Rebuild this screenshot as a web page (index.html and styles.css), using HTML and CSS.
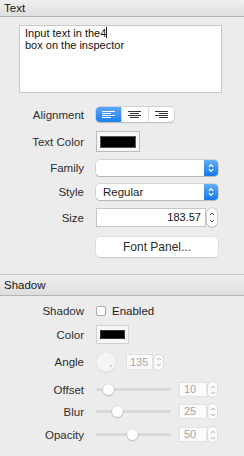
FILE: index.html
```html
<!DOCTYPE html>
<html>
<head>
<meta charset="utf-8">
<link rel="stylesheet" href="styles.css">
</head>
<body>
<div class="panel">
  <div class="hdr">Text</div>
  <div class="textbox">Input text in the4<span class="caret"></span><br>box on the inspector</div>

  <div class="row r-align">
    <span class="lbl">Alignment</span>
    <div class="seg">
      <div class="segi on">
        <svg width="13" height="7" viewBox="0 0 13 7"><g fill="#fff"><rect x="0" y="0" width="13" height="1"/><rect x="0" y="2" width="9" height="1"/><rect x="0" y="4" width="13" height="1"/><rect x="0" y="6" width="9" height="1"/></g></svg>
      </div>
      <div class="segi">
        <svg width="13" height="7" viewBox="0 0 13 7"><g fill="#333"><rect x="0" y="0" width="13" height="1"/><rect x="2" y="2" width="9" height="1"/><rect x="0" y="4" width="13" height="1"/><rect x="2" y="6" width="9" height="1"/></g></svg>
      </div>
      <div class="segi">
        <svg width="13" height="7" viewBox="0 0 13 7"><g fill="#333"><rect x="0" y="0" width="13" height="1"/><rect x="4" y="2" width="9" height="1"/><rect x="0" y="4" width="13" height="1"/><rect x="4" y="6" width="9" height="1"/></g></svg>
      </div>
    </div>
  </div>

  <div class="row r-color">
    <span class="lbl">Text Color</span>
    <div class="well"><div class="well-in"></div></div>
  </div>

  <div class="row r-family">
    <span class="lbl">Family</span>
    <div class="popup"><span class="popup-txt"></span><span class="popup-arr"><svg width="8" height="12" viewBox="0 0 8 12"><path d="M1.8 4.8 L4 2.6 L6.2 4.8 M1.8 7.2 L4 9.4 L6.2 7.2" fill="none" stroke="#fff" stroke-width="1.2"/></svg></span></div>
  </div>

  <div class="row r-style">
    <span class="lbl">Style</span>
    <div class="popup"><span class="popup-txt">Regular</span><span class="popup-arr"><svg width="8" height="12" viewBox="0 0 8 12"><path d="M1.8 4.8 L4 2.6 L6.2 4.8 M1.8 7.2 L4 9.4 L6.2 7.2" fill="none" stroke="#fff" stroke-width="1.2"/></svg></span></div>
  </div>

  <div class="row r-size">
    <span class="lbl">Size</span>
    <div class="field size-field">183.57</div>
    <div class="stepper big"><svg width="8" height="17" viewBox="0 0 8 17"><path d="M2 6 L4 4 L6 6 M2 11 L4 13 L6 11" fill="none" stroke="#666" stroke-width="1"/></svg></div>
  </div>

  <div class="row r-btn">
    <span class="lbl"></span>
    <div class="btn">Font Panel...</div>
  </div>

  <div class="hdr hdr2">Shadow</div>

  <div class="row r-shadow">
    <span class="lbl">Shadow</span>
    <span class="check"></span><span class="chk-lbl">Enabled</span>
  </div>

  <div class="row r-scolor">
    <span class="lbl">Color</span>
    <div class="well small"><div class="well-in"></div></div>
  </div>

  <div class="row r-angle">
    <span class="lbl">Angle</span>
    <div class="dial"><span class="dial-dot"></span></div>
    <div class="field dfield angle-field">135</div>
    <div class="stepper"><svg width="8" height="14" viewBox="0 0 8 14"><path d="M2.2 5 L4 3.2 L5.8 5 M2.2 9 L4 10.8 L5.8 9" fill="none" stroke="#aaa" stroke-width="1"/></svg></div>
  </div>

  <div class="row r-slider r-offset">
    <span class="lbl">Offset</span>
    <div class="track"><span class="knob" style="left:7px"></span></div>
    <div class="field dfield">10</div>
    <div class="stepper"><svg width="8" height="14" viewBox="0 0 8 14"><path d="M2.2 5 L4 3.2 L5.8 5 M2.2 9 L4 10.8 L5.8 9" fill="none" stroke="#aaa" stroke-width="1"/></svg></div>
  </div>

  <div class="row r-slider r-blur">
    <span class="lbl">Blur</span>
    <div class="track"><span class="knob" style="left:16px"></span></div>
    <div class="field dfield">25</div>
    <div class="stepper"><svg width="8" height="14" viewBox="0 0 8 14"><path d="M2.2 5 L4 3.2 L5.8 5 M2.2 9 L4 10.8 L5.8 9" fill="none" stroke="#aaa" stroke-width="1"/></svg></div>
  </div>

  <div class="row r-slider r-opacity">
    <span class="lbl">Opacity</span>
    <div class="track"><span class="knob" style="left:31px"></span></div>
    <div class="field dfield">50</div>
    <div class="stepper"><svg width="8" height="14" viewBox="0 0 8 14"><path d="M2.2 5 L4 3.2 L5.8 5 M2.2 9 L4 10.8 L5.8 9" fill="none" stroke="#aaa" stroke-width="1"/></svg></div>
  </div>
</div>
</body>
</html>
```

FILE: styles.css
```css
html, body {
  margin: 0;
  padding: 0;
  background: #ececec;
}
.panel {
  width: 244px;
  height: 456px;
  background: #ececec;
  font-family: "Liberation Sans", Arial, sans-serif;
  font-size: 11.5px;
  color: #2c2c2c;
  overflow: hidden;
}
.hdr {
  height: 16px;
  line-height: 16px;
  padding-left: 4px;
  font-size: 11.5px;
  color: #161616;
  background: linear-gradient(#efefef, #dedede);
  border-bottom: 1px solid #b3b3b3;
}
.hdr2 {
  margin-top: 17px;
  height: 20px;
  line-height: 20px;
  border-top: 1px solid #c6c6c6;
}
.textbox {
  box-sizing: border-box;
  margin: 8px 0 0 19px;
  width: 203px;
  height: 68px;
  background: #fff;
  border: 1px solid #c9c9c9;
  padding: 1px 5px;
  font-size: 11px;
  line-height: 12px;
  color: #111;
}
.caret {
  display: inline-block;
  width: 1px;
  height: 11px;
  background: #222;
  vertical-align: -1px;
}
.row {
  display: flex;
  align-items: center;
}
.lbl {
  width: 84px;
  margin-right: 12px;
  text-align: right;
  flex: none;
  white-space: nowrap;
}
.r-align { margin-top: 14px; height: 15px; }
.r-color { margin-top: 9px; height: 21px; }
.r-family { margin-top: 8px; height: 16px; }
.r-style { margin-top: 8px; height: 16px; }
.r-size { margin-top: 8px; height: 19px; }
.r-btn { margin-top: 10px; height: 20px; }
.r-shadow { margin-top: 8px; height: 14px; }
.r-scolor { margin-top: 7px; height: 19px; }
.r-angle { margin-top: 8px; height: 20px; }
.r-offset { margin-top: 10px; height: 15px; }
.r-blur { margin-top: 7px; height: 15px; }
.r-opacity { margin-top: 8px; height: 15px; }

.seg {
  display: flex;
  box-sizing: border-box;
  width: 78px;
  height: 15px;
  border-radius: 4px;
  background: #fff;
  box-shadow: 0 0 0 0.5px rgba(0,0,0,0.22), 0 1px 1px rgba(0,0,0,0.12);
  overflow: hidden;
}
.segi {
  flex: 1;
  display: flex;
  align-items: center;
  justify-content: center;
  border-left: 1px solid #dcdcdc;
}
.segi:first-child { border-left: none; }
.segi.on {
  background: linear-gradient(#5aa6fb, #1c7ff5);
}
.well {
  box-sizing: border-box;
  width: 44px;
  height: 21px;
  border: 1px solid #bdbdbd;
  background: #f6f6f6;
  padding: 4px 3px 0 3px;
}
.well-in {
  height: 12px;
  background: #000;
  border: 0.5px solid #555;
  box-sizing: border-box;
}
.well.small {
  width: 33px;
  height: 19px;
  border-color: #d2d2d2;
  padding: 4px 3px 0 3px;
}
.well.small .well-in { height: 9px; border-color: #333; }

.popup {
  display: flex;
  width: 122px;
  height: 16px;
  border-radius: 4px;
  background: #fff;
  box-shadow: 0 0 0 0.5px rgba(0,0,0,0.2), 0 1px 1px rgba(0,0,0,0.15);
  overflow: hidden;
}
.popup-txt {
  flex: 1;
  padding-left: 7px;
  line-height: 16px;
  color: #1c1c1c;
}
.popup-arr {
  width: 14px;
  display: flex;
  align-items: center;
  justify-content: center;
  background: linear-gradient(#65aefb, #1677ef);
}
.field {
  box-sizing: border-box;
  height: 19px;
  background: #fff;
  border: 1px solid #c6c6c6;
  line-height: 17px;
}
.size-field {
  width: 110px;
  text-align: right;
  padding-right: 4px;
  font-size: 11px;
  color: #111;
}
.stepper {
  box-sizing: border-box;
  margin-left: 1px;
  width: 9px;
  height: 15px;
  border-radius: 4px;
  background: #fafafa;
  box-shadow: 0 0 0 0.5px rgba(0,0,0,0.14);
  display: flex;
  align-items: center;
  justify-content: center;
}
.stepper.big {
  width: 10px;
  height: 19px;
  border-radius: 5px;
  box-shadow: 0 0 0 0.5px rgba(0,0,0,0.25), 0 1px 1px rgba(0,0,0,0.1);
  background: #fff;
}
.btn {
  width: 122px;
  height: 20px;
  border-radius: 4px;
  background: #fff;
  box-shadow: 0 0 0 0.5px rgba(0,0,0,0.1), 0 1px 1px rgba(0,0,0,0.08);
  line-height: 20px;
  text-align: center;
  font-size: 12px;
  color: #2c2c2c;
}
.check {
  box-sizing: border-box;
  width: 10px;
  height: 10px;
  border: 1px solid #a9a9a9;
  border-radius: 2px;
  background: #fff;
  margin-right: 6px;
}
.chk-lbl { color: #1c1c1c; }

.dial {
  position: relative;
  box-sizing: border-box;
  width: 20px;
  height: 20px;
  border-radius: 50%;
  background: #f4f4f4;
  box-shadow: 0 0 0 0.5px rgba(0,0,0,0.08), 0 1px 1px rgba(0,0,0,0.05);
  margin-right: 10px;
}
.dial-dot {
  position: absolute;
  left: 14px;
  top: 13px;
  width: 2px;
  height: 2px;
  border-radius: 50%;
  background: #c2c2c2;
}
.dfield {
  width: 28px;
  height: 15px;
  line-height: 13px;
  border-color: #e2e2e2;
  background: #fbfbfb;
  color: #a5a5a5;
  padding-left: 4px;
  font-size: 11px;
}
.angle-field {
  width: 27px;
  height: 16px;
  line-height: 14px;
  padding-left: 3px;
}
.track {
  position: relative;
  width: 75px;
  height: 3px;
  border-radius: 2px;
  background: #d9d9d9;
  margin-right: 8px;
}
.knob {
  position: absolute;
  top: -4px;
  width: 11px;
  height: 11px;
  border-radius: 50%;
  background: #fdfdfd;
  box-shadow: 0 0 0 0.5px rgba(0,0,0,0.12), 0 1px 1.5px rgba(0,0,0,0.18);
}
```
